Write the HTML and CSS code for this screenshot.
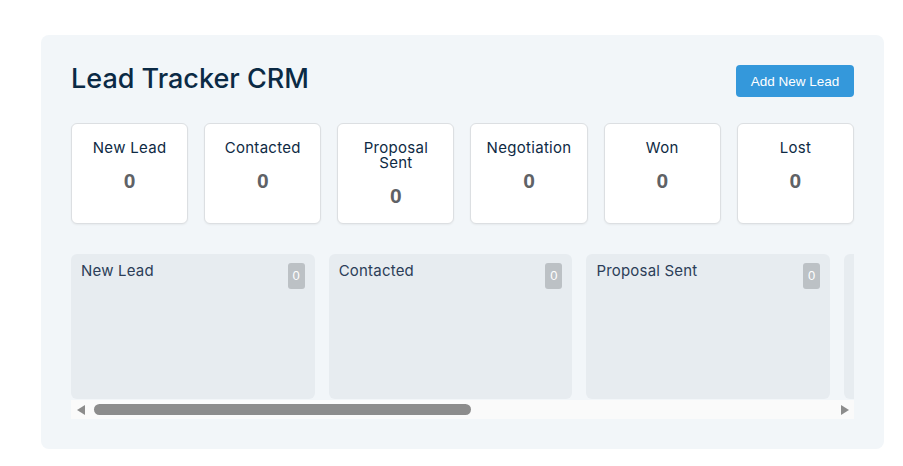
FILE: index.html
```html
<!DOCTYPE html>
<html lang="en">
<head>
<meta charset="utf-8">
<title>Lead Tracker CRM</title>
<link rel="stylesheet" href="styles.css">
</head>
<body>
<div class="app">
  <header class="header">
    <h1 class="title">Lead Tracker CRM</h1>
    <button class="add-btn">Add New Lead</button>
  </header>
  <section class="stats">
    <div class="stat"><div class="stat-label">New Lead</div><div class="stat-num">0</div></div>
    <div class="stat"><div class="stat-label">Contacted</div><div class="stat-num">0</div></div>
    <div class="stat"><div class="stat-label">Proposal Sent</div><div class="stat-num">0</div></div>
    <div class="stat"><div class="stat-label">Negotiation</div><div class="stat-num">0</div></div>
    <div class="stat"><div class="stat-label">Won</div><div class="stat-num">0</div></div>
    <div class="stat"><div class="stat-label">Lost</div><div class="stat-num">0</div></div>
  </section>
  <section class="board-wrap">
    <div class="board">
      <div class="column"><div class="col-head"><span class="col-title">New Lead</span><span class="badge">0</span></div></div>
      <div class="column"><div class="col-head"><span class="col-title">Contacted</span><span class="badge">0</span></div></div>
      <div class="column"><div class="col-head"><span class="col-title">Proposal Sent</span><span class="badge">0</span></div></div>
      <div class="column"><div class="col-head"><span class="col-title">Negotiation</span><span class="badge">0</span></div></div>
      <div class="column"><div class="col-head"><span class="col-title">Won</span><span class="badge">0</span></div></div>
      <div class="column"><div class="col-head"><span class="col-title">Lost</span><span class="badge">0</span></div></div>
    </div>
    <div class="scrollbar">
      <span class="arrow arrow-left"></span>
      <div class="track"><div class="thumb"></div></div>
      <span class="arrow arrow-right"></span>
    </div>
  </section>
</div>
</body>
</html>
```

FILE: styles.css
```css
* { box-sizing: border-box; }
body {
  margin: 0;
  background: #ffffff;
  font-family: Inter, "Noto Sans", sans-serif;
  color: #0e2a44;
}
.app {
  margin: 35px 19px 18px 41px;
  background: #f2f6f9;
  border-radius: 8px;
  padding: 27px 30px 30px 30px;
}
.header {
  display: flex;
  justify-content: space-between;
  align-items: center;
  margin-bottom: 26px;
}
.title {
  margin: 0 0 2px;
  font-size: 27px;
  font-weight: 500;
  color: #0b2a45;
  line-height: 30px;
}
.add-btn {
  background: #3498db;
  color: #ffffff;
  border: none;
  border-radius: 4px;
  font-family: "Liberation Sans", Arial, sans-serif;
  font-size: 13.5px;
  width: 118px;
  height: 32px;
  margin-top: 3px;
}
.stats {
  display: grid;
  grid-template-columns: repeat(6, 1fr);
  gap: 16px;
  margin-bottom: 30px;
}
.stat {
  background: #ffffff;
  border: 1px solid #dcdfe2;
  border-radius: 6px;
  height: 101px;
  padding: 16px 12px 0;
  text-align: center;
  box-shadow: 0 1px 2px rgba(0,0,0,0.05);
}
.stat-label {
  font-size: 15px;
  line-height: 15px;
  letter-spacing: 0.3px;
  color: #0e2a44;
}
.stat-num {
  margin-top: 14px;
  font-family: "Liberation Sans", Arial, sans-serif;
  font-weight: bold;
  font-size: 21px;
  color: #5f6266;
}
.board-wrap {
  display: flex;
  flex-direction: column;
}
.board {
  display: flex;
  gap: 14px;
  overflow: hidden;
  padding-bottom: 1px;
}
.column {
  flex: 0 0 243.7px;
  height: 145px;
  background: #e7ecf0;
  border-radius: 6px;
  padding: 8px 10px 9px;
}
.col-head {
  display: flex;
  justify-content: space-between;
  align-items: flex-start;
}
.col-title {
  font-size: 15px;
  color: #2c3e58;
  line-height: 17px;
  letter-spacing: 0.2px;
}
.badge {
  background: #bcc1c5;
  color: #ffffff;
  font-family: "Liberation Sans", Arial, sans-serif;
  font-size: 13px;
  line-height: 18px;
  padding: 4px 4px;
  min-width: 17px;
  margin-top: 1px;
  text-align: center;
  border-radius: 3px;
}
.scrollbar {
  display: flex;
  align-items: center;
  height: 19px;
  background: #fafafa;
  padding: 0 5px 0 6px;
}
.arrow {
  width: 0;
  height: 0;
  border-top: 5.5px solid transparent;
  border-bottom: 5.5px solid transparent;
  flex: 0 0 auto;
}
.arrow-left {
  border-right: 8px solid #8c8c8c;
}
.arrow-right {
  border-left: 8px solid #8c8c8c;
}
.track {
  flex: 1;
  padding: 0 9px;
}
.thumb {
  width: 377px;
  height: 11px;
  border-radius: 6px;
  background: #8c8c8c;
}
```
